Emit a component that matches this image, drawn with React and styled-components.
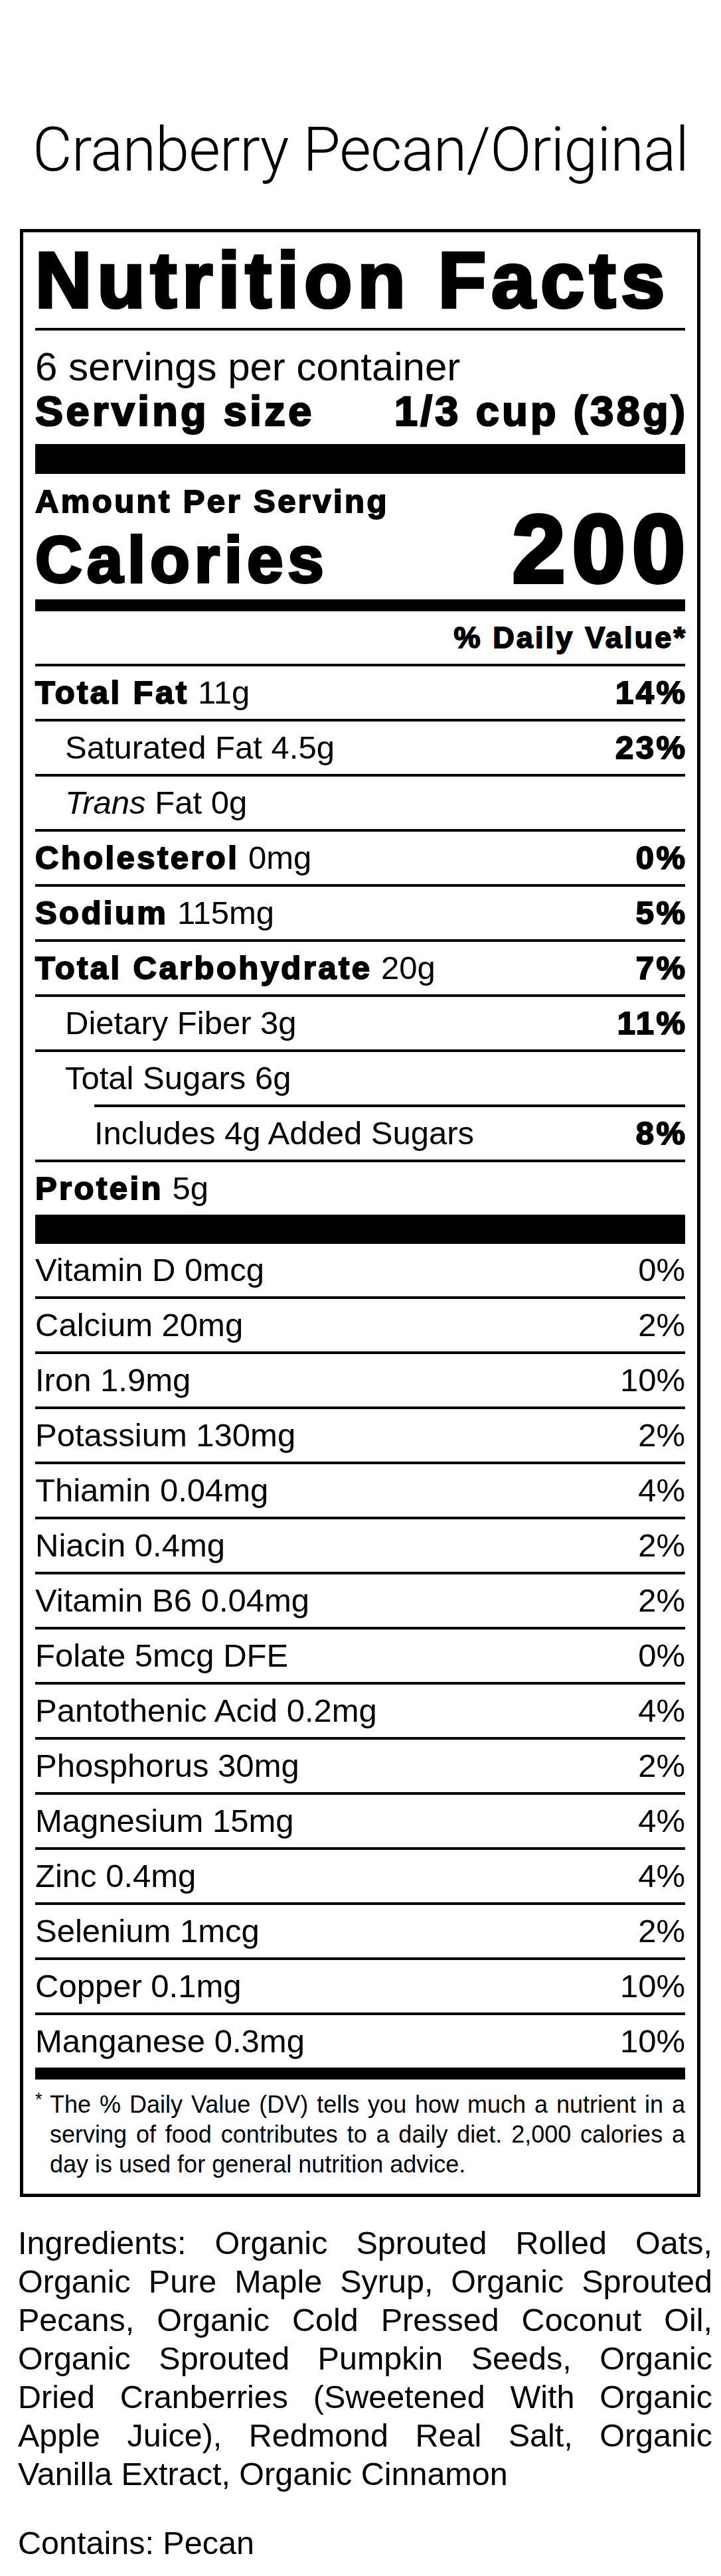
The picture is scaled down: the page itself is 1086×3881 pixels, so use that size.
import React from 'react';
import styled, { createGlobalStyle, css } from 'styled-components';

const GlobalStyle = createGlobalStyle`
  html, body { margin: 0; padding: 0; background: #fff; }
  body {
    font-family: "Liberation Sans", Arial, Helvetica, sans-serif;
    color: #000;
  }
  * { box-sizing: border-box; }
`;

const heavy = css`
  font-weight: 700;
  letter-spacing: 0.07em;
  -webkit-text-stroke: 0.04em #000;
`;

const Page = styled.div`
  width: 1086px;
  padding: 176px 0 21px;
  display: flex;
  flex-direction: column;
`;

const ProductTitle = styled.h1`
  margin: 0;
  font-family: Roboto, "Noto Sans", sans-serif;
  font-weight: 300;
  font-size: 92px;
  line-height: 100px;
  letter-spacing: -0.01em;
  text-align: center;
`;

const Label = styled.section`
  margin: 69px 31px 0 30px;
  border: 5px solid #000;
  padding: 13px 18px 22px;
  display: flex;
  flex-direction: column;
`;

const LabelTitle = styled.h2`
  margin: 0;
  font-size: 118px;
  line-height: 118px;
  white-space: nowrap;
  ${heavy}
`;

const Bar = styled.div`
  height: ${(p) => p.$h}px;
  margin-top: ${(p) => p.$mt || 0}px;
  background: #000;
`;

const Servings = styled.div`
  margin-top: 22px;
  font-size: 60px;
  line-height: 66px;
`;

const ServingSize = styled.div`
  display: flex;
  justify-content: space-between;
  font-size: 63px;
  line-height: 66px;
  ${heavy}
`;

const TrailFix = styled.span`
  margin-right: -0.07em;
`;

const Amount = styled.div`
  margin-top: 16px;
  font-size: 49px;
  line-height: 50px;
  ${heavy}
`;

const CaloriesRow = styled.div`
  height: 123px;
  display: flex;
  justify-content: space-between;
  align-items: baseline;
`;

const CaloriesLabel = styled.span`
  font-size: 98px;
  line-height: 96px;
  ${heavy}
`;

const CaloriesValue = styled.span`
  font-size: 144px;
  line-height: 96px;
  margin-right: -0.07em;
  ${heavy}
`;

const DVHeader = styled.div`
  height: 79px;
  text-align: right;
  font-size: 45px;
  line-height: 79px;
  ${heavy}
`;

const Row = styled.div`
  height: ${(p) => (p.$ruled ? 83 : 79)}px;
  border-top: ${(p) => (p.$ruled ? '4px solid #000' : 'none')};
  margin-left: ${(p) => p.$inset || 0}px;
  padding-left: ${(p) => p.$indent || 0}px;
  display: flex;
  justify-content: space-between;
  font-size: 49px;
  line-height: 79px;
  white-space: nowrap;
`;

const Name = styled.span`
  ${heavy}
`;

const Percent = styled.span`
  ${(p) =>
    p.$bold &&
    css`
      ${heavy}
      margin-right: -0.07em;
    `}
`;

const Footnote = styled.div`
  margin-top: 15px;
  display: flex;
  align-items: flex-start;
`;

const Asterisk = styled.span`
  width: 22px;
  flex: none;
  font-size: 27px;
  line-height: 30px;
`;

const FootText = styled.p`
  margin: 0;
  flex: 1;
  font-size: 36px;
  line-height: 45px;
  text-align: justify;
`;

const Ingredients = styled.p`
  margin: ${(p) => p.$mt}px 13px 0 27px;
  font-size: 48.5px;
  line-height: 58px;
  text-align: justify;
`;

const nutrients = [
  { name: 'Total Fat', amount: '11g', dv: '14%', bold: true },
  { name: 'Saturated Fat', amount: '4.5g', dv: '23%', level: 1 },
  { name: 'Fat', pre: 'Trans', amount: '0g', level: 1 },
  { name: 'Cholesterol', amount: '0mg', dv: '0%', bold: true },
  { name: 'Sodium', amount: '115mg', dv: '5%', bold: true },
  { name: 'Total Carbohydrate', amount: '20g', dv: '7%', bold: true },
  { name: 'Dietary Fiber', amount: '3g', dv: '11%', level: 1 },
  { name: 'Total Sugars', amount: '6g', level: 1 },
  { name: 'Includes 4g Added Sugars', dv: '8%', level: 2 },
  { name: 'Protein', amount: '5g', bold: true },
];

const vitamins = [
  ['Vitamin D 0mcg', '0%'],
  ['Calcium 20mg', '2%'],
  ['Iron 1.9mg', '10%'],
  ['Potassium 130mg', '2%'],
  ['Thiamin 0.04mg', '4%'],
  ['Niacin 0.4mg', '2%'],
  ['Vitamin B6 0.04mg', '2%'],
  ['Folate 5mcg DFE', '0%'],
  ['Pantothenic Acid 0.2mg', '4%'],
  ['Phosphorus 30mg', '2%'],
  ['Magnesium 15mg', '4%'],
  ['Zinc 0.4mg', '4%'],
  ['Selenium 1mcg', '2%'],
  ['Copper 0.1mg', '10%'],
  ['Manganese 0.3mg', '10%'],
];

function NutrientLine({ n }) {
  const indent = n.level === 1 ? 45 : 0;
  const inset = n.level === 2 ? 89 : 0;
  return (
    <Row $ruled $indent={indent} $inset={inset}>
      <span>
        {n.bold ? (
          <>
            <Name>{n.name}</Name> {n.amount}
          </>
        ) : (
          <>
            {n.pre && (
              <>
                <em>{n.pre}</em>{' '}
              </>
            )}
            {n.name}
            {n.amount ? ` ${n.amount}` : ''}
          </>
        )}
      </span>
      {n.dv && <Percent $bold>{n.dv}</Percent>}
    </Row>
  );
}

export default function App() {
  return (
    <>
      <GlobalStyle />
      <Page>
        <ProductTitle>Cranberry Pecan/Original</ProductTitle>
        <Label>
          <LabelTitle>Nutrition Facts</LabelTitle>
          <Bar $h={4} $mt={13} />
          <Servings>6 servings per container</Servings>
          <ServingSize>
            <span>Serving size</span>
            <TrailFix>1/3 cup (38g)</TrailFix>
          </ServingSize>
          <Bar $h={45} $mt={17} />
          <Amount>Amount Per Serving</Amount>
          <CaloriesRow>
            <CaloriesLabel>Calories</CaloriesLabel>
            <CaloriesValue>200</CaloriesValue>
          </CaloriesRow>
          <Bar $h={18} />
          <DVHeader>
            <TrailFix>% Daily Value*</TrailFix>
          </DVHeader>
          {nutrients.map((n, i) => (
            <NutrientLine key={i} n={n} />
          ))}
          <Bar $h={44} />
          {vitamins.map(([label, dv], i) => (
            <Row key={label} $ruled={i > 0}>
              <span>{label}</span>
              <Percent>{dv}</Percent>
            </Row>
          ))}
          <Bar $h={18} />
          <Footnote>
            <Asterisk>*</Asterisk>
            <FootText>
              The % Daily Value (DV) tells you how much a nutrient in a serving of food
              contributes to a daily diet. 2,000 calories a day is used for general
              nutrition advice.
            </FootText>
          </Footnote>
        </Label>
        <Ingredients $mt={40}>
          Ingredients: Organic Sprouted Rolled Oats, Organic Pure Maple Syrup, Organic
          Sprouted Pecans, Organic Cold Pressed Coconut Oil, Organic Sprouted Pumpkin Seeds,
          Organic Dried Cranberries (Sweetened With Organic Apple Juice), Redmond Real Salt,
          Organic Vanilla Extract, Organic Cinnamon
        </Ingredients>
        <Ingredients $mt={46}>Contains: Pecan</Ingredients>
      </Page>
    </>
  );
}
